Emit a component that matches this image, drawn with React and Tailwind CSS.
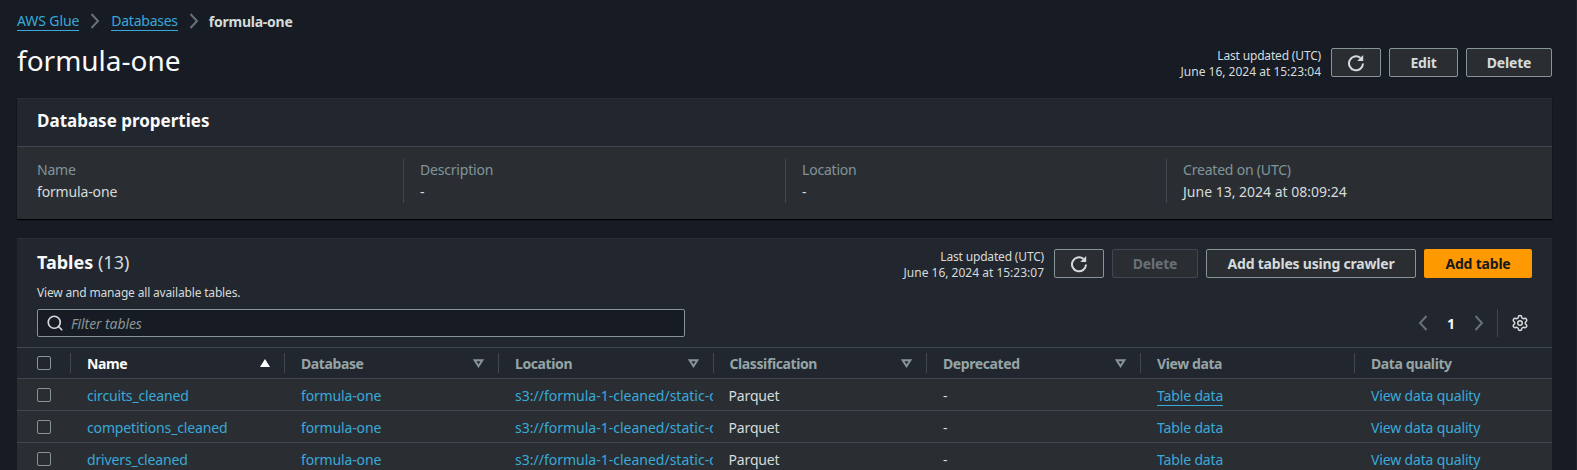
import { Search, Settings } from 'lucide-react';

const rows = ['circuits_cleaned', 'competitions_cleaned', 'drivers_cleaned'];

const props = [
  { label: 'Name', value: 'formula-one' },
  { label: 'Description', value: '-' },
  { label: 'Location', value: '-' },
  { label: 'Created on (UTC)', value: 'June 13, 2024 at 08:09:24' },
];

const tableCols = 'grid grid-cols-[53px_214px_214px_214.5px_213.5px_214px_214px_198px]';

function Refresh() {
  return (
    <svg width="18" height="18" viewBox="0 0 18 18" fill="none" stroke="currentColor" strokeWidth="2">
      <path d="M16 9.5a7 7 0 1 1-2.6-5.6" />
      <path d="M16.2 1v6h-6z" fill="currentColor" stroke="none" />
    </svg>
  );
}

function Chevron({ left, className }) {
  return (
    <svg width="16" height="18" viewBox="0 0 16 18" fill="none" stroke="currentColor" strokeWidth="2" className={className}>
      <path d={left ? 'M11.5 2 5 9l6.5 7' : 'M4.5 2 11 9l-6.5 7'} />
    </svg>
  );
}

function Btn({ children, className = '' }) {
  return (
    <button className={`h-[29px] flex items-center justify-center rounded-[2px] border border-[#879596] bg-[#2a2e33] text-[14px] font-bold tracking-[-0.2px] text-[#d5dbdb] ${className}`}>
      {children}
    </button>
  );
}

function SortDown() {
  return (
    <svg width="11" height="9" viewBox="0 0 11 9" fill="none" stroke="#879596" strokeWidth="2">
      <path d="M1.7 1.2h7.6L5.5 7.2z" />
    </svg>
  );
}

function Updated({ time }) {
  return (
    <div className="text-right text-[12px] leading-[16px] text-[#d5dbdb]">
      <div className="tracking-[-0.17px]">Last updated (UTC)</div>
      <div>{time}</div>
    </div>
  );
}

function HeadCell({ label, sort, active }) {
  return (
    <div className="flex items-center h-[20px] border-l border-[#414750] pl-[16px] pr-[14px] justify-between">
      <span className={`text-[14px] font-bold tracking-[-0.4px] ${active ? 'text-[#fafafa]' : 'text-[#95a5a6]'}`}>{label}</span>
      {sort && <SortDown />}
      {active && <span className="w-0 h-0 border-x-[5.5px] border-x-transparent border-b-[8px] border-b-white" />}
    </div>
  );
}

export default function App() {
  return (
    <div className="h-[470px] overflow-hidden bg-[#161b24] border-r border-[#20242c] pl-[17px] pr-[24px] font-['Noto_Sans',sans-serif] text-[#d5dbdb]">

      {/* Breadcrumb */}
      <div className="flex items-center h-[20px] mt-[11px] text-[14px] leading-[19px] tracking-[-0.1px]">
        <a className="text-[#39a9d8] border-b border-[#39a9d8]">AWS Glue</a>
        <Chevron className="mx-[8px] text-[#687078]" />
        <a className="text-[#39a9d8] border-b border-[#39a9d8] tracking-[-0.25px]">Databases</a>
        <Chevron className="ml-[8px] mr-[7px] text-[#687078]" />
        <span className="font-bold tracking-[-0.25px] text-[#d5dbdb]">formula-one</span>
      </div>

      {/* Title */}
      <div className="flex justify-between items-start h-[46px] mt-[6px]">
        <h1 className="text-[28px] leading-[46px] text-[#fafafa]">formula-one</h1>
        <div className="flex items-start mt-[11px]">
          <Updated time="June 16, 2024 at 15:23:04" />
          <Btn className="w-[50px] ml-[10px]"><Refresh /></Btn>
          <Btn className="w-[69px] ml-[8px]">Edit</Btn>
          <Btn className="w-[86px] ml-[8px]">Delete</Btn>
        </div>
      </div>

      {/* Properties */}
      <section className="mt-[15px] h-[121px] border-t border-[#2a2e33] shadow-[0_1px_1px_#000]">
        <div className="h-[48px] pb-[3px] bg-[#22262e] border-b border-[#414750] flex items-center pl-[20px]">
          <h2 className="text-[17px] font-bold text-[#fafafa]">Database properties</h2>
        </div>
        <div className="h-[72px] bg-[#2a2e33] pl-[20px] pt-[12px] grid grid-cols-[366px_382px_381px_1fr]">
          {props.map((p, i) => (
            <div key={p.label} className={`h-[44px] text-[14px] leading-[22px] ${i > 0 ? 'border-l border-[#414750] pl-[16px]' : ''}`}>
              <div className="text-[#80959a] tracking-[-0.2px]">{p.label}</div>
              <div className={i === 0 ? 'tracking-[-0.15px]' : ''}>{p.value}</div>
            </div>
          ))}
        </div>
      </section>

      {/* Tables */}
      <section className="mt-[19px] border-t border-[#2a2e33]">
        <div className="bg-[#22262e] h-[108px] px-[20px] pt-[10px] flex flex-col">
          <div className="flex justify-between">
            <h2 className="text-[18px] leading-[24px] font-bold text-[#fafafa] mt-[1px]">
              Tables <span className="font-normal text-[#d5dbdb]">(13)</span>
            </h2>
            <div className="flex items-start">
              <Updated time="June 16, 2024 at 15:23:07" />
              <Btn className="w-[50px] ml-[10px]"><Refresh /></Btn>
              <button className="h-[29px] w-[86px] ml-[8px] rounded-[2px] border border-[#414750] bg-[#2a2e33] text-[14px] font-bold tracking-[-0.2px] text-[#687078]">Delete</button>
              <Btn className="w-[210px] ml-[8px]">Add tables using crawler</Btn>
              <button className="h-[29px] w-[108px] ml-[8px] rounded-[2px] bg-[#ff9900] text-[14px] font-bold tracking-[-0.2px] text-[#16191f]">Add table</button>
            </div>
          </div>
          <div className="text-[12px] leading-[16px] mt-[4px] tracking-[-0.17px]">View and manage all available tables.</div>
          <div className="flex justify-between items-center mt-[8px]">
            <div className="w-[648px] h-[28px] border border-[#879596] rounded-[2px] bg-[#161b24] flex items-center pl-[8px]">
              <Search size={18} strokeWidth={2.2} className="text-[#d5dbdb]" />
              <span className="ml-[7px] text-[14px] italic tracking-[-0.1px] text-[#879596]">Filter tables</span>
            </div>
            <div className="flex items-center h-[28px] mr-[3px]">
              <Chevron left className="text-[#687078]" />
              <span className="ml-[16px] mr-[16px] text-[14px] font-bold text-[#fafafa]">1</span>
              <Chevron className="text-[#687078]" />
              <div className="h-[28px] ml-[10px] border-l border-[#414750] pl-[13px] flex items-center">
                <Settings size={18} strokeWidth={2} className="text-[#d5dbdb]" />
              </div>
            </div>
          </div>
        </div>

        {/* Table head */}
        <div className={`${tableCols} h-[32px] items-center bg-[#22262e] border-y border-[#414750]`}>
          <div className="pl-[20px]"><span className="block w-[14px] h-[14px] rounded-[2px] border border-[#879596]" /></div>
          <HeadCell label="Name" active />
          <HeadCell label="Database" sort />
          <HeadCell label="Location" sort />
          <HeadCell label="Classification" sort />
          <HeadCell label="Deprecated" sort />
          <HeadCell label="View data" />
          <HeadCell label="Data quality" />
        </div>

        {/* Table rows */}
        {rows.map((name, i) => (
          <div key={name} className={`${tableCols} h-[32px] pt-[2px] items-center bg-[#2a2e33] border-b border-[#414750] text-[14px] tracking-[-0.15px] text-[#39a9d8]`}>
            <div className="pl-[20px] -mt-[2px]"><span className="block w-[14px] h-[14px] rounded-[2px] border border-[#879596]" /></div>
            <div className="pl-[17px]">{name}</div>
            <div className="pl-[17px]">formula-one</div>
            <div className="pl-[17px] pr-[1px] overflow-hidden whitespace-nowrap tracking-normal">s3://formula-1-cleaned/static-data/</div>
            <div className="pl-[16px] text-[#d5dbdb]">Parquet</div>
            <div className="pl-[17px] text-[#d5dbdb]">-</div>
            <div className="pl-[17px]"><span className={i === 0 ? 'border-b border-[#39a9d8]' : ''}>Table data</span></div>
            <div className="pl-[17px]">View data quality</div>
          </div>
        ))}
      </section>
    </div>
  );
}
